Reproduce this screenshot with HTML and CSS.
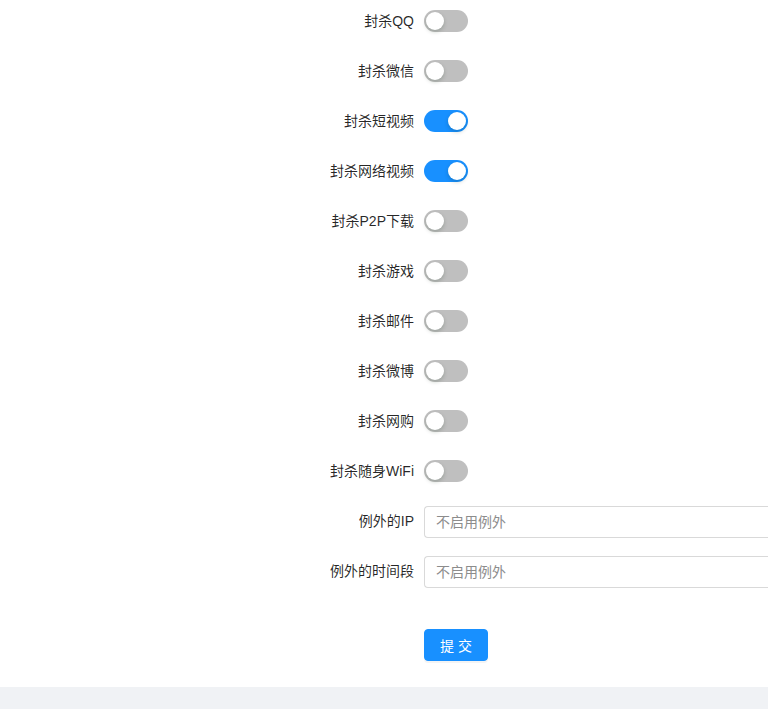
FILE: index.html
```html
<!DOCTYPE html>
<html lang="zh-CN">
<head>
<meta charset="utf-8">
<link rel="stylesheet" href="styles.css">
</head>
<body>
<div class="page">
  <form class="form">
    <div class="row"><label class="lbl">封杀QQ</label><div class="ctl"><span class="sw"><span class="knob"></span></span></div></div>
    <div class="row"><label class="lbl">封杀微信</label><div class="ctl"><span class="sw"><span class="knob"></span></span></div></div>
    <div class="row"><label class="lbl">封杀短视频</label><div class="ctl"><span class="sw on"><span class="knob"></span></span></div></div>
    <div class="row"><label class="lbl">封杀网络视频</label><div class="ctl"><span class="sw on"><span class="knob"></span></span></div></div>
    <div class="row"><label class="lbl">封杀P2P下载</label><div class="ctl"><span class="sw"><span class="knob"></span></span></div></div>
    <div class="row"><label class="lbl">封杀游戏</label><div class="ctl"><span class="sw"><span class="knob"></span></span></div></div>
    <div class="row"><label class="lbl">封杀邮件</label><div class="ctl"><span class="sw"><span class="knob"></span></span></div></div>
    <div class="row"><label class="lbl">封杀微博</label><div class="ctl"><span class="sw"><span class="knob"></span></span></div></div>
    <div class="row"><label class="lbl">封杀网购</label><div class="ctl"><span class="sw"><span class="knob"></span></span></div></div>
    <div class="row"><label class="lbl">封杀随身WiFi</label><div class="ctl"><span class="sw"><span class="knob"></span></span></div></div>
    <div class="row"><label class="lbl">例外的IP</label><div class="ctl"><input class="inp" type="text" placeholder="不启用例外"></div></div>
    <div class="row"><label class="lbl">例外的时间段</label><div class="ctl"><input class="inp" type="text" placeholder="不启用例外"></div></div>
    <div class="row submit"><div class="lbl"></div><div class="ctl"><button type="button" class="btn">提 交</button></div></div>
  </form>
  <div class="footer"></div>
</div>
</body>
</html>
```
FILE: styles.css
```css
html, body {
  margin: 0;
  padding: 0;
  background: #fff;
  overflow: hidden;
}
body {
  font-family: "Liberation Sans", "Noto Sans CJK SC", sans-serif;
  font-size: 14px;
  color: rgba(0, 0, 0, 0.85);
}
.page {
  display: flex;
  flex-direction: column;
  height: 709px;
}
.form {
  padding-top: 5px;
  flex: 1;
}
.row {
  display: flex;
  align-items: center;
  height: 32px;
  margin-bottom: 18px;
}
.lbl {
  flex: none;
  width: 424px;
  box-sizing: border-box;
  padding-right: 10px;
  text-align: right;
  line-height: 32px;
  white-space: nowrap;
}
.ctl {
  flex: 1;
  display: flex;
  align-items: center;
  min-width: 0;
}
.sw {
  position: relative;
  display: inline-block;
  width: 44px;
  height: 22px;
  border-radius: 11px;
  background: #bfbfbf;
}
.sw.on {
  background: #1890ff;
}
.knob {
  position: absolute;
  top: 2px;
  left: 2px;
  width: 18px;
  height: 18px;
  border-radius: 50%;
  background: #fff;
  box-shadow: 0 2px 4px rgba(0, 35, 11, 0.2);
}
.sw.on .knob {
  left: 24px;
}
.inp {
  width: 344px;
  flex: none;
  height: 32px;
  margin-top: 1px;
  box-sizing: border-box;
  border: 1px solid #d9d9d9;
  border-right: none;
  border-radius: 4px 0 0 4px;
  padding: 4px 11px;
  font-family: "Liberation Sans", "Noto Sans CJK SC", sans-serif;
  font-size: 14px;
  color: rgba(0, 0, 0, 0.85);
  outline: none;
  background: #fff;
}
.inp::placeholder {
  color: #8c8c8c;
}
.submit {
  margin-top: 42px;
}
.btn {
  width: 64px;
  height: 32px;
  border: 1px solid #1890ff;
  background: #1890ff;
  color: #fff;
  border-radius: 4px;
  font-family: "Liberation Sans", "Noto Sans CJK SC", sans-serif;
  font-size: 14px;
  padding: 0;
  box-shadow: 0 2px 0 rgba(0, 0, 0, 0.045);
}
.footer {
  flex: none;
  height: 22px;
  background: #f0f2f5;
}
```
